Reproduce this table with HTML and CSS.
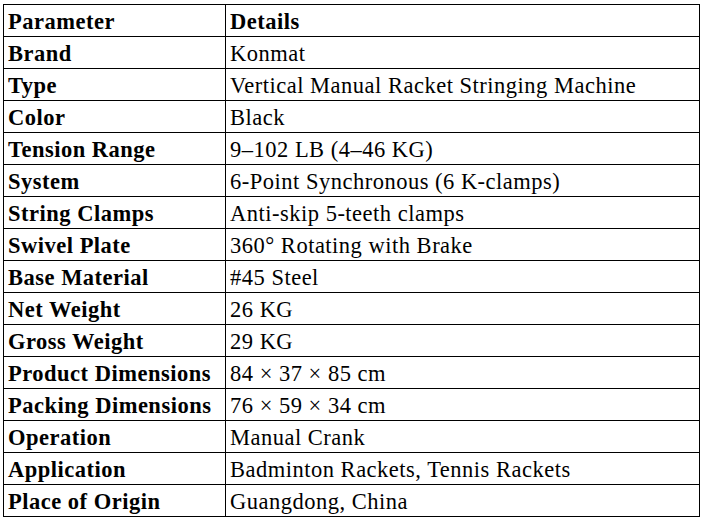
FILE: index.html
```html
<!DOCTYPE html>
<html>
<head>
<meta charset="utf-8">
<link rel="stylesheet" href="styles.css">
</head>
<body>
<div class="wrap">
<table class="spec">
<colgroup><col class="c1"><col class="c2"></colgroup>
<tr><th>Parameter</th><th>Details</th></tr>
<tr><th>Brand</th><td>Konmat</td></tr>
<tr><th>Type</th><td>Vertical Manual Racket Stringing Machine</td></tr>
<tr><th>Color</th><td>Black</td></tr>
<tr><th>Tension Range</th><td>9–102 LB (4–46 KG)</td></tr>
<tr><th>System</th><td>6-Point Synchronous (6 K-clamps)</td></tr>
<tr><th>String Clamps</th><td>Anti-skip 5-teeth clamps</td></tr>
<tr><th>Swivel Plate</th><td>360° Rotating with Brake</td></tr>
<tr><th>Base Material</th><td>#45 Steel</td></tr>
<tr><th>Net Weight</th><td>26 KG</td></tr>
<tr><th>Gross Weight</th><td>29 KG</td></tr>
<tr><th>Product Dimensions</th><td>84 × 37 × 85 cm</td></tr>
<tr><th>Packing Dimensions</th><td>76 × 59 × 34 cm</td></tr>
<tr><th>Operation</th><td>Manual Crank</td></tr>
<tr><th>Application</th><td>Badminton Rackets, Tennis Rackets</td></tr>
<tr><th>Place of Origin</th><td>Guangdong, China</td></tr>
</table>
</div>
</body>
</html>
```
FILE: styles.css
```css
html, body {
  margin: 0;
  padding: 0;
  background: #ffffff;
}
.wrap {
  padding: 4px 0 0 3px;
}
.spec {
  border-collapse: collapse;
  width: 696px;
  font-family: "Liberation Serif", "Times New Roman", serif;
  font-size: 22.5px;
  letter-spacing: 0.5px;
  color: #000;
  table-layout: fixed;
}
.c1 { width: 222px; }
.c2 { width: 474px; }
.spec th, .spec td {
  border: 1px solid #000;
  height: 29px;
  padding: 2px 3px 0 4px;
  line-height: 29px;
  vertical-align: top;
  text-align: left;
  white-space: nowrap;
}
.spec th {
  font-weight: bold;
}
.spec td {
  font-weight: normal;
}
```
